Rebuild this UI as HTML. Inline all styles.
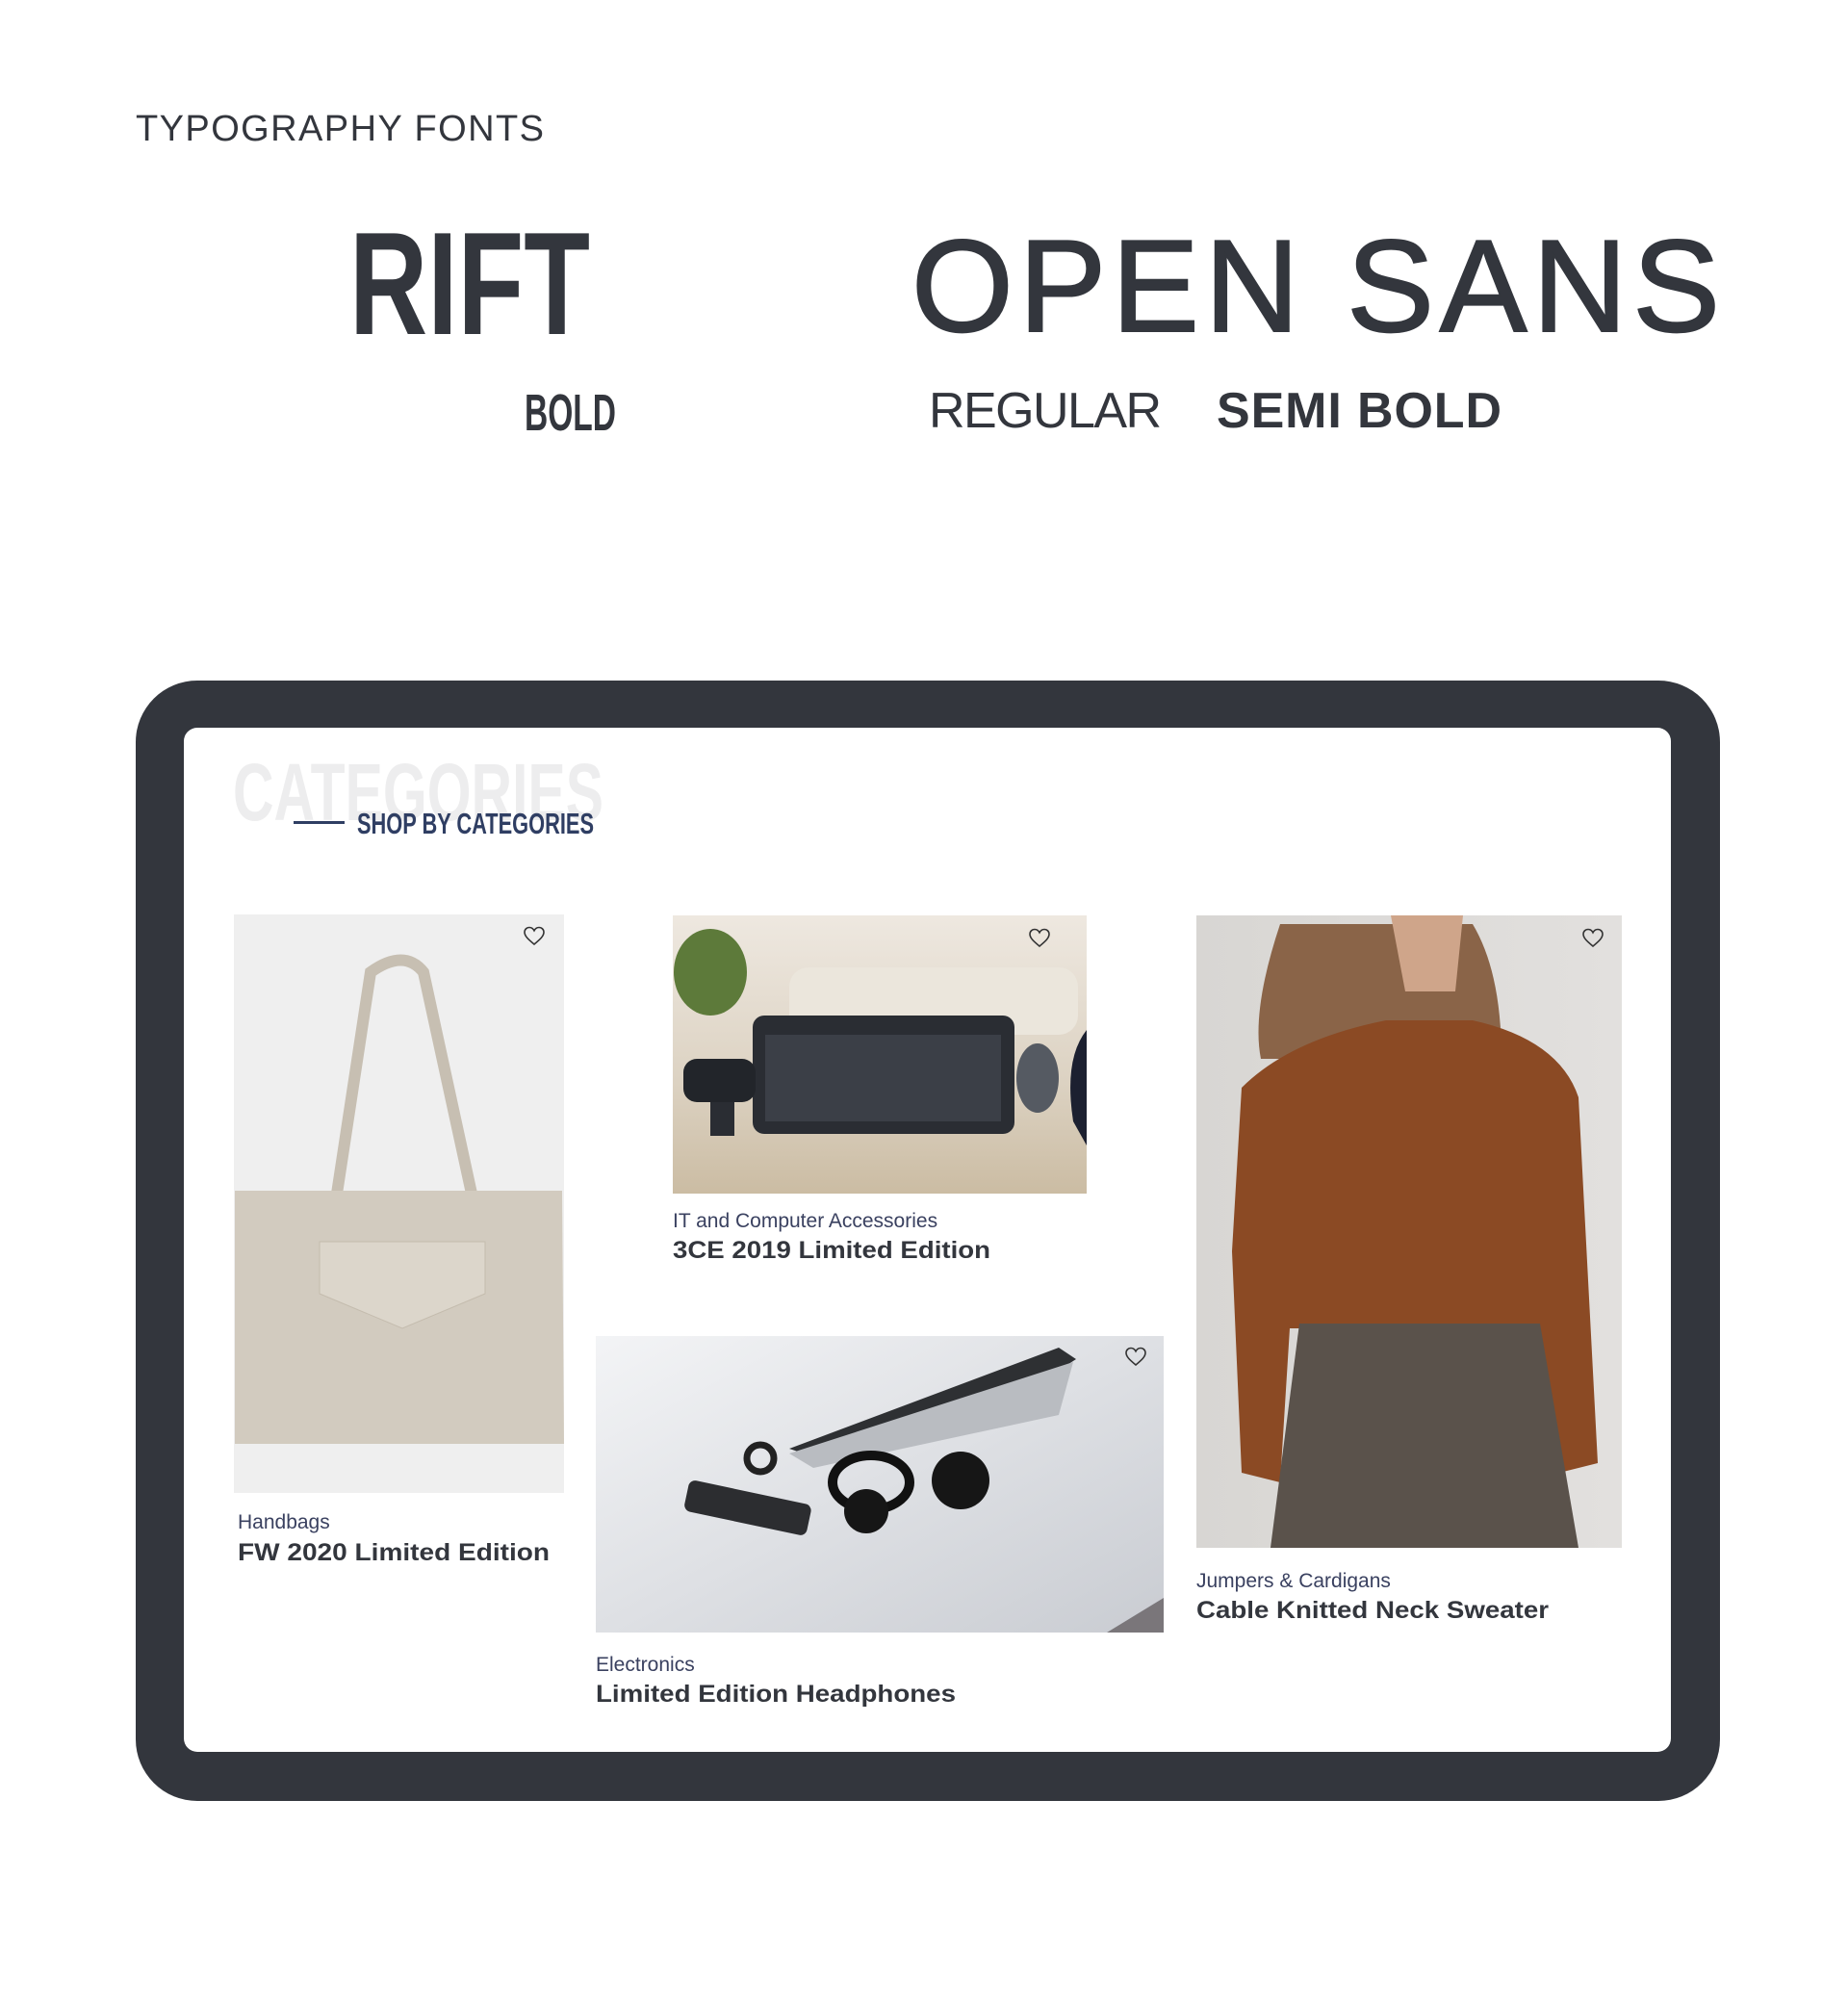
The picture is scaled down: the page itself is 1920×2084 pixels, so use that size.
<!DOCTYPE html>
<html><head><meta charset="utf-8"><style>html,body{margin:0;padding:0;background:#fff}svg{display:block}</style></head>
<body>
<svg width="1920" height="2084" viewBox="0 0 1920 2084" xmlns="http://www.w3.org/2000/svg" font-family="Liberation Sans, sans-serif">
<defs>
<linearGradient id="kb" x1="0" y1="0" x2="0" y2="1"><stop offset="0" stop-color="#eee8e0"/><stop offset="0.6" stop-color="#dcd2c2"/><stop offset="1" stop-color="#cbbca3"/></linearGradient>
<linearGradient id="hp" x1="0" y1="0" x2="1" y2="1"><stop offset="0" stop-color="#f3f4f6"/><stop offset="1" stop-color="#c9ccd2"/></linearGradient>
<linearGradient id="sw" x1="0" y1="0" x2="1" y2="0"><stop offset="0" stop-color="#d8d6d3"/><stop offset="1" stop-color="#e2e0de"/></linearGradient>
<symbol id="heart" viewBox="0 0 24 24"><path d="M12 21 C6 16 2 12.5 2 8.5 C2 5.5 4.3 3.5 7 3.5 C9 3.5 11 5 12 6.8 C13 5 15 3.5 17 3.5 C19.7 3.5 22 5.5 22 8.5 C22 12.5 18 16 12 21Z" fill="none" stroke="#333" stroke-width="1.6"/></symbol>
</defs>
<g fill="#33363d">
<text x="141" y="146" font-size="38" textLength="424" lengthAdjust="spacing">TYPOGRAPHY  FONTS</text>
<text x="363" y="347" font-size="152" font-weight="bold" textLength="250" lengthAdjust="spacingAndGlyphs">RIFT</text>
<text x="947" y="344" font-size="136" stroke="#33363d" stroke-width="2" textLength="840" lengthAdjust="spacing">OPEN SANS</text>
<text x="545" y="447" font-size="54" font-weight="bold" textLength="95" lengthAdjust="spacingAndGlyphs">BOLD</text>
<text x="965" y="444" font-size="52" textLength="242" lengthAdjust="spacing">REGULAR</text>
<text x="1264" y="444" font-size="52" font-weight="bold" textLength="296" lengthAdjust="spacing">SEMI BOLD</text>
</g>
<rect x="141" y="707" width="1646" height="1164" rx="64" fill="#33363d"/>
<rect x="191" y="756" width="1545" height="1064" rx="14" fill="#fff"/>
<text x="242" y="852" font-size="84" font-weight="bold" fill="#ededee" textLength="385" lengthAdjust="spacingAndGlyphs">CATEGORIES</text>
<rect x="305" y="853" width="53" height="3" fill="#2f3e63"/>
<text x="371" y="866" font-size="31" font-weight="bold" fill="#2f3e63" textLength="246" lengthAdjust="spacingAndGlyphs">SHOP BY CATEGORIES</text>

<!-- bag -->
<rect x="243" y="950" width="343" height="601" fill="#efefef"/>
<path d="M350 1240 L385 1010 Q420 985 440 1010 L490 1240" fill="none" stroke="#c7bfb2" stroke-width="12"/>
<path d="M244 1237 L584 1237 L586 1500 L244 1500Z" fill="#d2cbbf"/>
<path d="M332 1290 L504 1290 L504 1344 L418 1380 L332 1344Z" fill="#dcd6cb" stroke="#c4bcae"/>
<use href="#heart" x="543" y="960" width="24" height="24"/>
<text x="247" y="1588" font-size="21" fill="#3a4160">Handbags</text>
<text x="247" y="1621" font-size="25" font-weight="bold" fill="#33363d" textLength="324" lengthAdjust="spacingAndGlyphs">FW 2020 Limited Edition</text>

<!-- keyboard -->
<rect x="699" y="951" width="430" height="289" fill="url(#kb)"/>
<rect x="820" y="1005" width="300" height="70" rx="20" fill="#ebe6dc"/>
<ellipse cx="738" cy="1010" rx="38" ry="45" fill="#5d7a3a"/>
<rect x="782" y="1055" width="272" height="123" rx="12" fill="#2a2d33"/>
<rect x="795" y="1075" width="245" height="90" fill="#3b3f47"/>
<rect x="710" y="1100" width="75" height="45" rx="14" fill="#22252a"/>
<rect x="738" y="1145" width="25" height="35" fill="#2a2d33"/>
<ellipse cx="1078" cy="1120" rx="22" ry="36" fill="#555a62"/>
<path d="M1115 1165 Q1105 1100 1129 1070 L1129 1190Z" fill="#1c2030"/>
<use href="#heart" x="1068" y="962" width="24" height="24"/>
<text x="699" y="1275" font-size="21" fill="#3a4160">IT and Computer Accessories</text>
<text x="699" y="1307" font-size="25" font-weight="bold" fill="#33363d" textLength="330" lengthAdjust="spacingAndGlyphs">3CE 2019 Limited Edition</text>

<!-- headphones -->
<rect x="619" y="1388" width="590" height="308" fill="url(#hp)"/>
<path d="M820 1505 L1100 1400 L1118 1412 L1090 1430 Q950 1470 850 1515Z" fill="#2e3033"/>
<path d="M820 1510 L1115 1415 L1100 1470 L845 1525Z" fill="#b9bcc1"/>
<ellipse cx="905" cy="1540" rx="40" ry="28" fill="none" stroke="#111" stroke-width="10"/>
<circle cx="900" cy="1570" r="23" fill="#161616"/>
<circle cx="998" cy="1538" r="30" fill="#161616"/>
<rect x="712" y="1550" width="130" height="33" rx="7" transform="rotate(12 777 1566)" fill="#2c2d30"/>
<circle cx="790" cy="1515" r="14" fill="none" stroke="#222" stroke-width="7"/>
<path d="M1150 1696 L1209 1660 L1209 1696Z" fill="#7a767a"/>
<use href="#heart" x="1168" y="1397" width="24" height="24"/>
<text x="619" y="1736" font-size="21" fill="#3a4160">Electronics</text>
<text x="619" y="1768" font-size="25" font-weight="bold" fill="#33363d" textLength="374" lengthAdjust="spacingAndGlyphs">Limited Edition Headphones</text>

<!-- sweater -->
<rect x="1243" y="951" width="442" height="657" fill="url(#sw)"/>
<path d="M1330 960 Q1300 1050 1310 1100 L1560 1100 Q1560 1010 1530 960Z" fill="#8a6448"/>
<path d="M1445 951 L1520 951 L1512 1030 L1460 1030Z" fill="#cfa58a"/>
<path d="M1290 1130 Q1340 1080 1440 1060 L1530 1060 Q1620 1080 1640 1140 L1660 1520 L1620 1530 L1600 1380 L1600 1380 L1340 1380 L1330 1540 L1290 1530 L1280 1300Z" fill="#8b4a24"/>
<path d="M1350 1375 L1600 1375 L1640 1608 L1320 1608Z" fill="#5a524b"/>
<use href="#heart" x="1643" y="962" width="24" height="24"/>
<text x="1243" y="1649" font-size="21" fill="#3a4160">Jumpers &amp; Cardigans</text>
<text x="1243" y="1681" font-size="25" font-weight="bold" fill="#33363d" textLength="366" lengthAdjust="spacingAndGlyphs">Cable Knitted Neck Sweater</text>
</svg>
</body></html>
